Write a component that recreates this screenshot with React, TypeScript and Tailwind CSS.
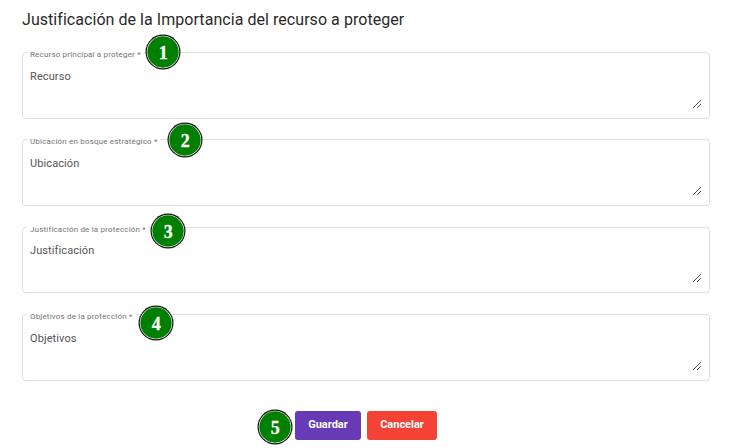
type FieldProps = {
  label: string;
  value: string;
  step: number;
  box: string;
  legend: string;
  text: string;
  badge: string;
};

function Badge({ n, className }: { n: number; className: string }) {
  return (
    <svg className={className} width="36" height="36" viewBox="0 0 36 36">
      <circle cx="18" cy="18" r="17.5" fill="#111" />
      <circle cx="18" cy="18" r="16.3" fill="#fff" />
      <circle cx="18" cy="18" r="15.7" fill="#008000" />
      <text
        x="18.2"
        y="25"
        textAnchor="middle"
        fill="#fff"
        stroke="#fff"
        strokeWidth="0.3"
        className="font-['Liberation_Serif',serif] text-[18px] font-bold"
      >
        {n}
      </text>
    </svg>
  );
}

function Grip() {
  return (
    <svg
      className="absolute right-[8px] bottom-[10px]"
      width="8"
      height="8"
      viewBox="0 0 8 8"
      fill="#555"
      shapeRendering="crispEdges"
    >
      {[0, 1, 2, 3, 4, 5, 6, 7].map((i) => (
        <rect key={i} x={i} y={7 - i} width="1" height="1" />
      ))}
      {[0, 1, 2, 3].map((i) => (
        <rect key={`s${i}`} x={i + 4} y={7 - i} width="1" height="1" />
      ))}
    </svg>
  );
}

function Field({ label, value, step, box, legend, text, badge }: FieldProps) {
  return (
    <div className={`relative w-[688px] rounded-[4px] border border-[#dfdfdf] ${box}`}>
      <span className={`absolute -top-px left-[4px] h-px bg-white ${legend}`} />
      <label className="absolute -top-[4px] left-[7px] text-[8px] leading-[12px] tracking-[0.18px] whitespace-nowrap text-[#747474]">
        {label}
      </label>
      <p className={`pl-[7px] text-[11px] leading-[16px] tracking-[0.1px] text-[#555] ${text}`}>{value}</p>
      <Grip />
      <Badge n={step} className={`absolute ${badge}`} />
    </div>
  );
}

export default function App() {
  return (
    <main className="h-[448px] w-[733px] overflow-hidden bg-white pl-[22px] font-[Roboto,sans-serif]">
      <h1 className="pt-[8px] text-[16px] leading-[24px] tracking-[0.05px] text-[#2a2a2a]">
        Justificación de la Importancia del recurso a proteger
      </h1>
      <section className="flex flex-col pt-[20px]">
        <Field
          label="Recurso principal a proteger *"
          value="Recurso"
          step={1}
          box="h-[67px]"
          legend="w-[117px]"
          text="pt-[16px]"
          badge="-top-[19px] left-[122px]"
        />
        <Field
          label="Ubicación en bosque estratégico *"
          value="Ubicación"
          step={2}
          box="mt-[20px] h-[67px]"
          legend="w-[134px]"
          text="pt-[16px]"
          badge="-top-[18px] left-[144px]"
        />
        <Field
          label="Justificación de la protección *"
          value="Justificación"
          step={3}
          box="mt-[21px] h-[66px]"
          legend="w-[122px]"
          text="pt-[15px]"
          badge="-top-[15px] left-[127px]"
        />
        <Field
          label="Objetivos de la protección *"
          value="Objetivos"
          step={4}
          box="mt-[21px] h-[67px]"
          legend="w-[109px]"
          text="pt-[16px]"
          badge="-top-[10px] left-[115px]"
        />
      </section>
      <div className="relative mt-[30px] flex gap-[6px] pl-[273px]">
        <Badge n={5} className="absolute -top-[2px] left-[235px]" />
        <button className="h-[29px] w-[66px] rounded-[3px] bg-[#673ab7] text-[11px] font-bold text-white">Guardar</button>
        <button className="h-[29px] w-[70px] rounded-[3px] bg-[#f44336] text-[11px] font-bold text-white">Cancelar</button>
      </div>
    </main>
  );
}
